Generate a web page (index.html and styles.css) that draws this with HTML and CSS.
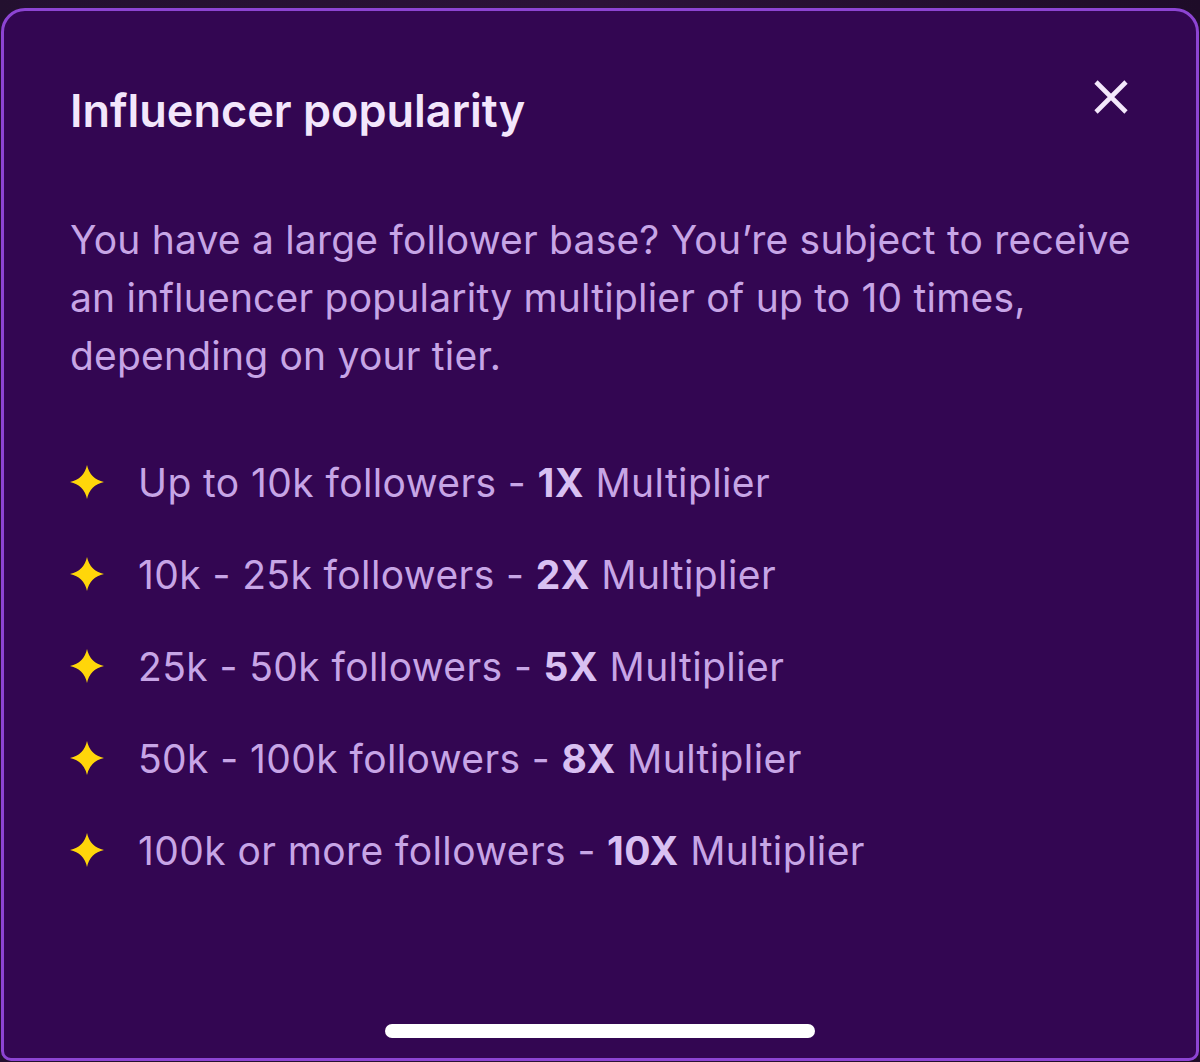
FILE: index.html
```html
<!DOCTYPE html>
<html lang="en">
<head>
<meta charset="utf-8">
<title>Influencer popularity</title>
<link rel="stylesheet" href="styles.css">
</head>
<body>
<div class="screen">
  <section class="sheet">
    <header class="sheet-head">
      <h1 class="title">Influencer popularity</h1>
      <button class="close" aria-label="Close">
        <svg viewBox="0 0 34 34" width="34" height="34"><path d="M2 2 L32 32 M32 2 L2 32" stroke="#f4e8fc" stroke-width="4.6" stroke-linecap="butt" fill="none"/></svg>
      </button>
    </header>
    <p class="intro">You have a large follower base? You’re subject to receive an influencer popularity multiplier of up to 10 times, depending on your tier.</p>
    <ul class="tiers">
      <li class="tier"><svg class="star" viewBox="0 0 34 34"><path d="M17 0 Q20 14 34 17 Q20 20 17 34 Q14 20 0 17 Q14 14 17 0 Z" fill="#ffd60a"/></svg><span>Up to 10k followers - <b>1X</b> Multiplier</span></li>
      <li class="tier"><svg class="star" viewBox="0 0 34 34"><path d="M17 0 Q20 14 34 17 Q20 20 17 34 Q14 20 0 17 Q14 14 17 0 Z" fill="#ffd60a"/></svg><span>10k - 25k followers - <b>2X</b> Multiplier</span></li>
      <li class="tier"><svg class="star" viewBox="0 0 34 34"><path d="M17 0 Q20 14 34 17 Q20 20 17 34 Q14 20 0 17 Q14 14 17 0 Z" fill="#ffd60a"/></svg><span>25k - 50k followers - <b>5X</b> Multiplier</span></li>
      <li class="tier"><svg class="star" viewBox="0 0 34 34"><path d="M17 0 Q20 14 34 17 Q20 20 17 34 Q14 20 0 17 Q14 14 17 0 Z" fill="#ffd60a"/></svg><span>50k - 100k followers - <b>8X</b> Multiplier</span></li>
      <li class="tier"><svg class="star" viewBox="0 0 34 34"><path d="M17 0 Q20 14 34 17 Q20 20 17 34 Q14 20 0 17 Q14 14 17 0 Z" fill="#ffd60a"/></svg><span>100k or more followers - <b>10X</b> Multiplier</span></li>
    </ul>
    <div class="home-indicator"></div>
  </section>
</div>
</body>
</html>
```
FILE: styles.css
```css
* { box-sizing: border-box; }
html, body { margin: 0; padding: 0; }
body {
  width: 1200px;
  height: 1062px;
  overflow: hidden;
  background: linear-gradient(90deg, #23102f 0%, #2c1238 50%, #1e0c28 100%);
  font-family: Inter, "Noto Sans", sans-serif;
}
.screen {
  padding-top: 8px;
  height: 1062px;
}
.sheet {
  margin: 0 1px;
  height: 1053px;
  background: #330652;
  border: 3px solid #8d44d3;
  border-radius: 24px 24px 10px 10px;
  padding: 0 66px;
  display: flex;
  flex-direction: column;
}
.sheet-head {
  display: flex;
  justify-content: space-between;
  align-items: flex-start;
  padding-top: 73px;
}
.title {
  margin: 0;
  font-size: 45px;
  font-weight: 600;
  line-height: 54px;
  color: #f3e6fc;
  letter-spacing: 0;
}
.close {
  background: none;
  border: 0;
  padding: 0;
  margin-top: -4px;
  margin-right: 2px;
  width: 34px;
  height: 34px;
}
.close svg { display: block; }
.intro {
  margin: 73px -36px 0 0;
  font-size: 39px;
  line-height: 58px;
  letter-spacing: 0.2px;
  color: #c7a5e6;
  font-weight: 400;
}
.tiers {
  list-style: none;
  margin: 71px 0 0 0;
  padding: 0;
  display: flex;
  flex-direction: column;
  gap: 40px;
}
.tier {
  display: flex;
  align-items: center;
  gap: 34px;
  height: 52px;
  font-size: 39px;
  letter-spacing: 0.4px;
  color: #c7a5e6;
}
.tier b { font-weight: 700; color: #d9c0f2; }
.star { width: 34px; height: 34px; flex: none; }
.home-indicator {
  margin-top: auto;
  margin-bottom: 20px;
  align-self: center;
  width: 430px;
  height: 14px;
  border-radius: 7px;
  background: #ffffff;
}
```
